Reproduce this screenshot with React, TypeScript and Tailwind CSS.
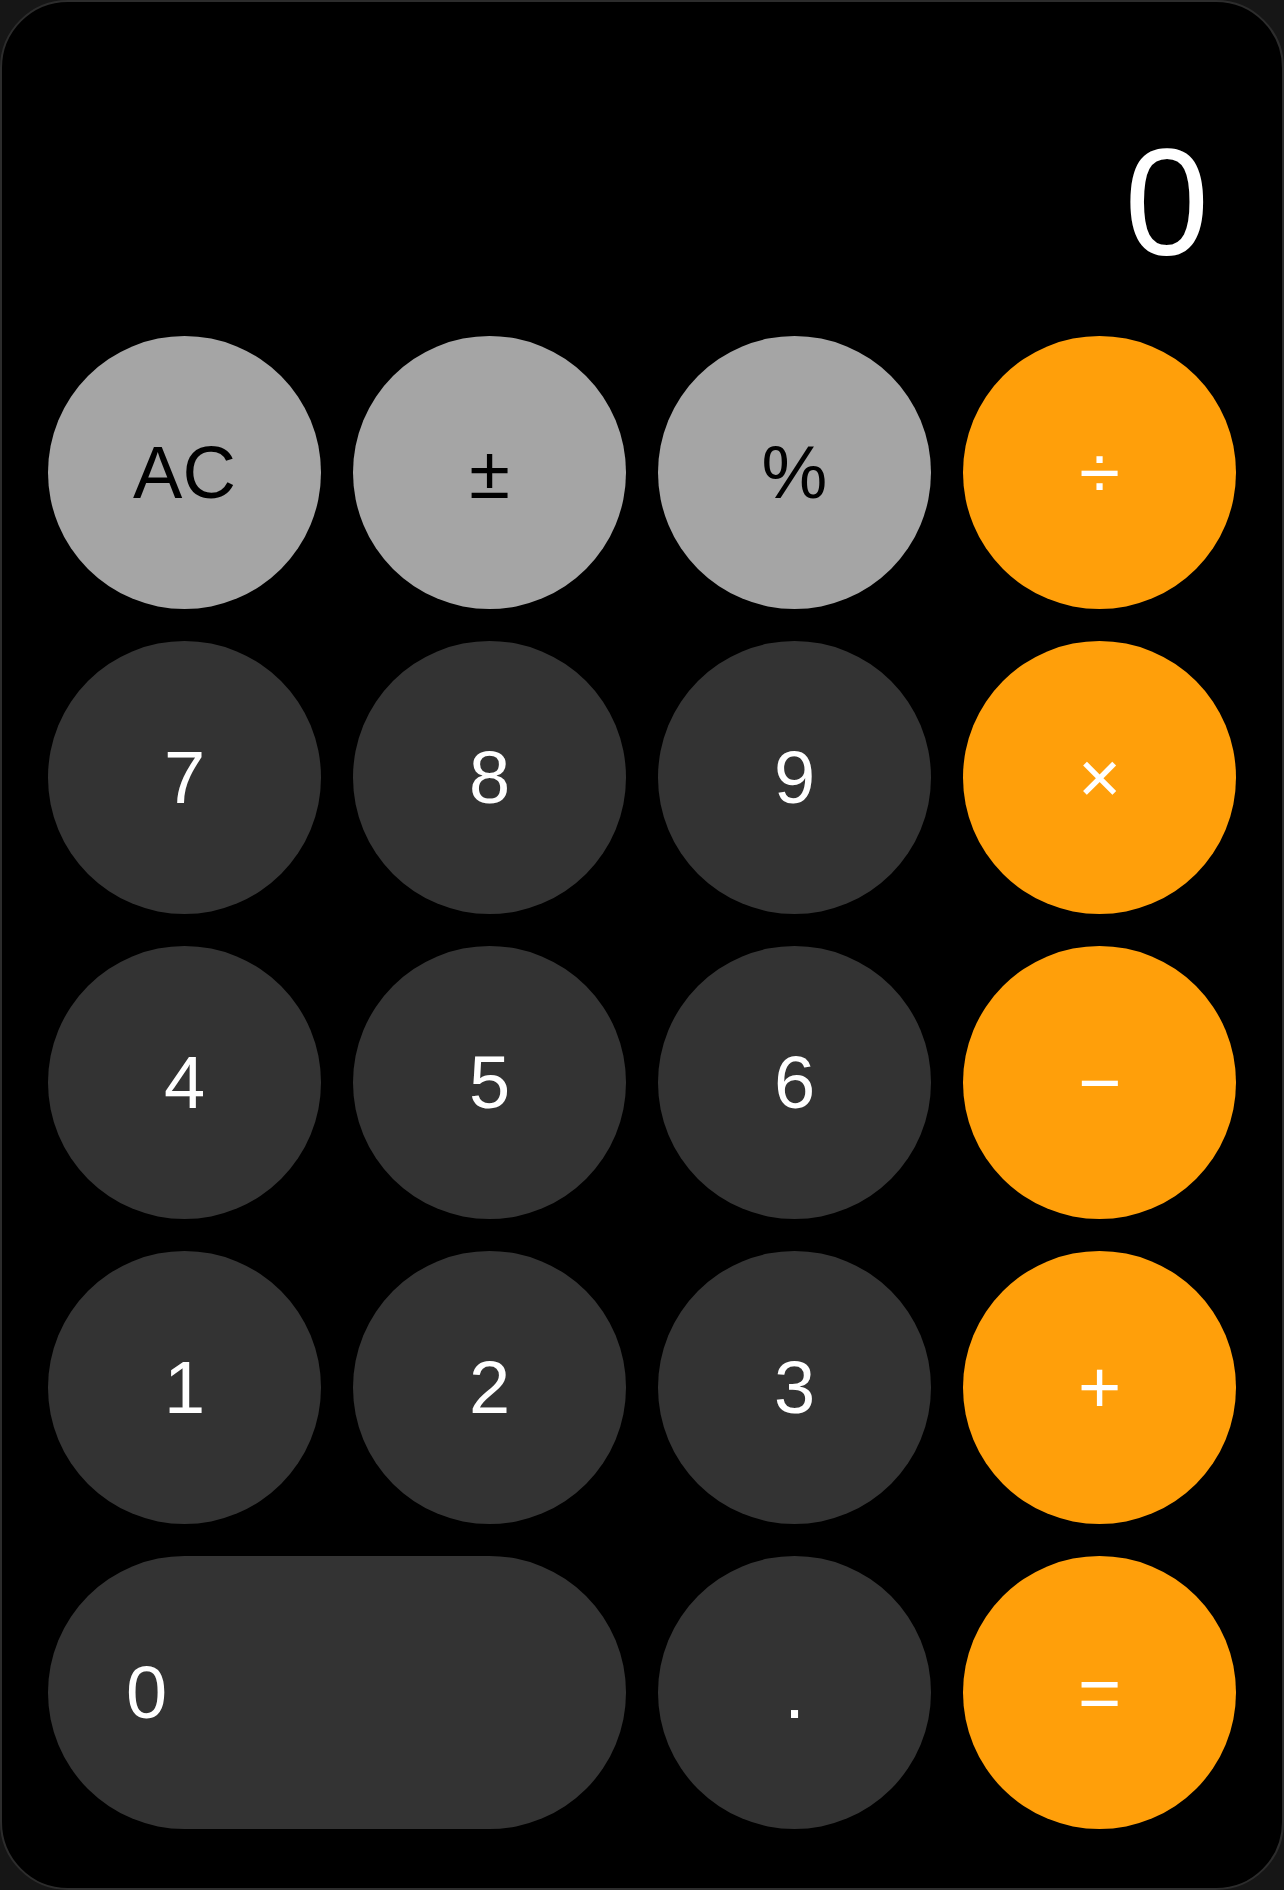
import React from 'react';

type Kind = 'fn' | 'num' | 'op';

interface Key {
  label: string;
  kind: Kind;
  wide?: boolean;
}

const keys: Key[] = [
  { label: 'AC', kind: 'fn' },
  { label: '±', kind: 'fn' },
  { label: '%', kind: 'fn' },
  { label: '÷', kind: 'op' },
  { label: '7', kind: 'num' },
  { label: '8', kind: 'num' },
  { label: '9', kind: 'num' },
  { label: '×', kind: 'op' },
  { label: '4', kind: 'num' },
  { label: '5', kind: 'num' },
  { label: '6', kind: 'num' },
  { label: '−', kind: 'op' },
  { label: '1', kind: 'num' },
  { label: '2', kind: 'num' },
  { label: '3', kind: 'num' },
  { label: '+', kind: 'op' },
  { label: '0', kind: 'num', wide: true },
  { label: '.', kind: 'num' },
  { label: '=', kind: 'op' },
];

const kindClass: Record<Kind, string> = {
  fn: 'bg-[#a5a5a5] text-black',
  num: 'bg-[#333333] text-white',
  op: 'bg-[#ff9f0a] text-white',
};

export default function App() {
  return (
    <div className="min-h-screen bg-[#161616] font-['Liberation_Sans',Arial,sans-serif]">
      <div className="h-[1890px] w-full rounded-[68px] border-2 border-[#2c2c2c] bg-black px-[46px]">
        <div className="flex justify-end pt-[124px] pb-[58px] pr-[27px]">
          <span className="text-[152px] leading-none text-white">0</span>
        </div>
        <div className="grid grid-cols-4 gap-x-[32px] gap-y-[32px]">
          {keys.map(k => (
            <button
              key={k.label}
              className={
                'flex h-[273px] items-center rounded-full text-[74px] ' +
                kindClass[k.kind] +
                (k.wide ? ' col-span-2 justify-start pl-[78px]' : ' justify-center')
              }
            >
              {k.label}
            </button>
          ))}
        </div>
      </div>
    </div>
  );
}
